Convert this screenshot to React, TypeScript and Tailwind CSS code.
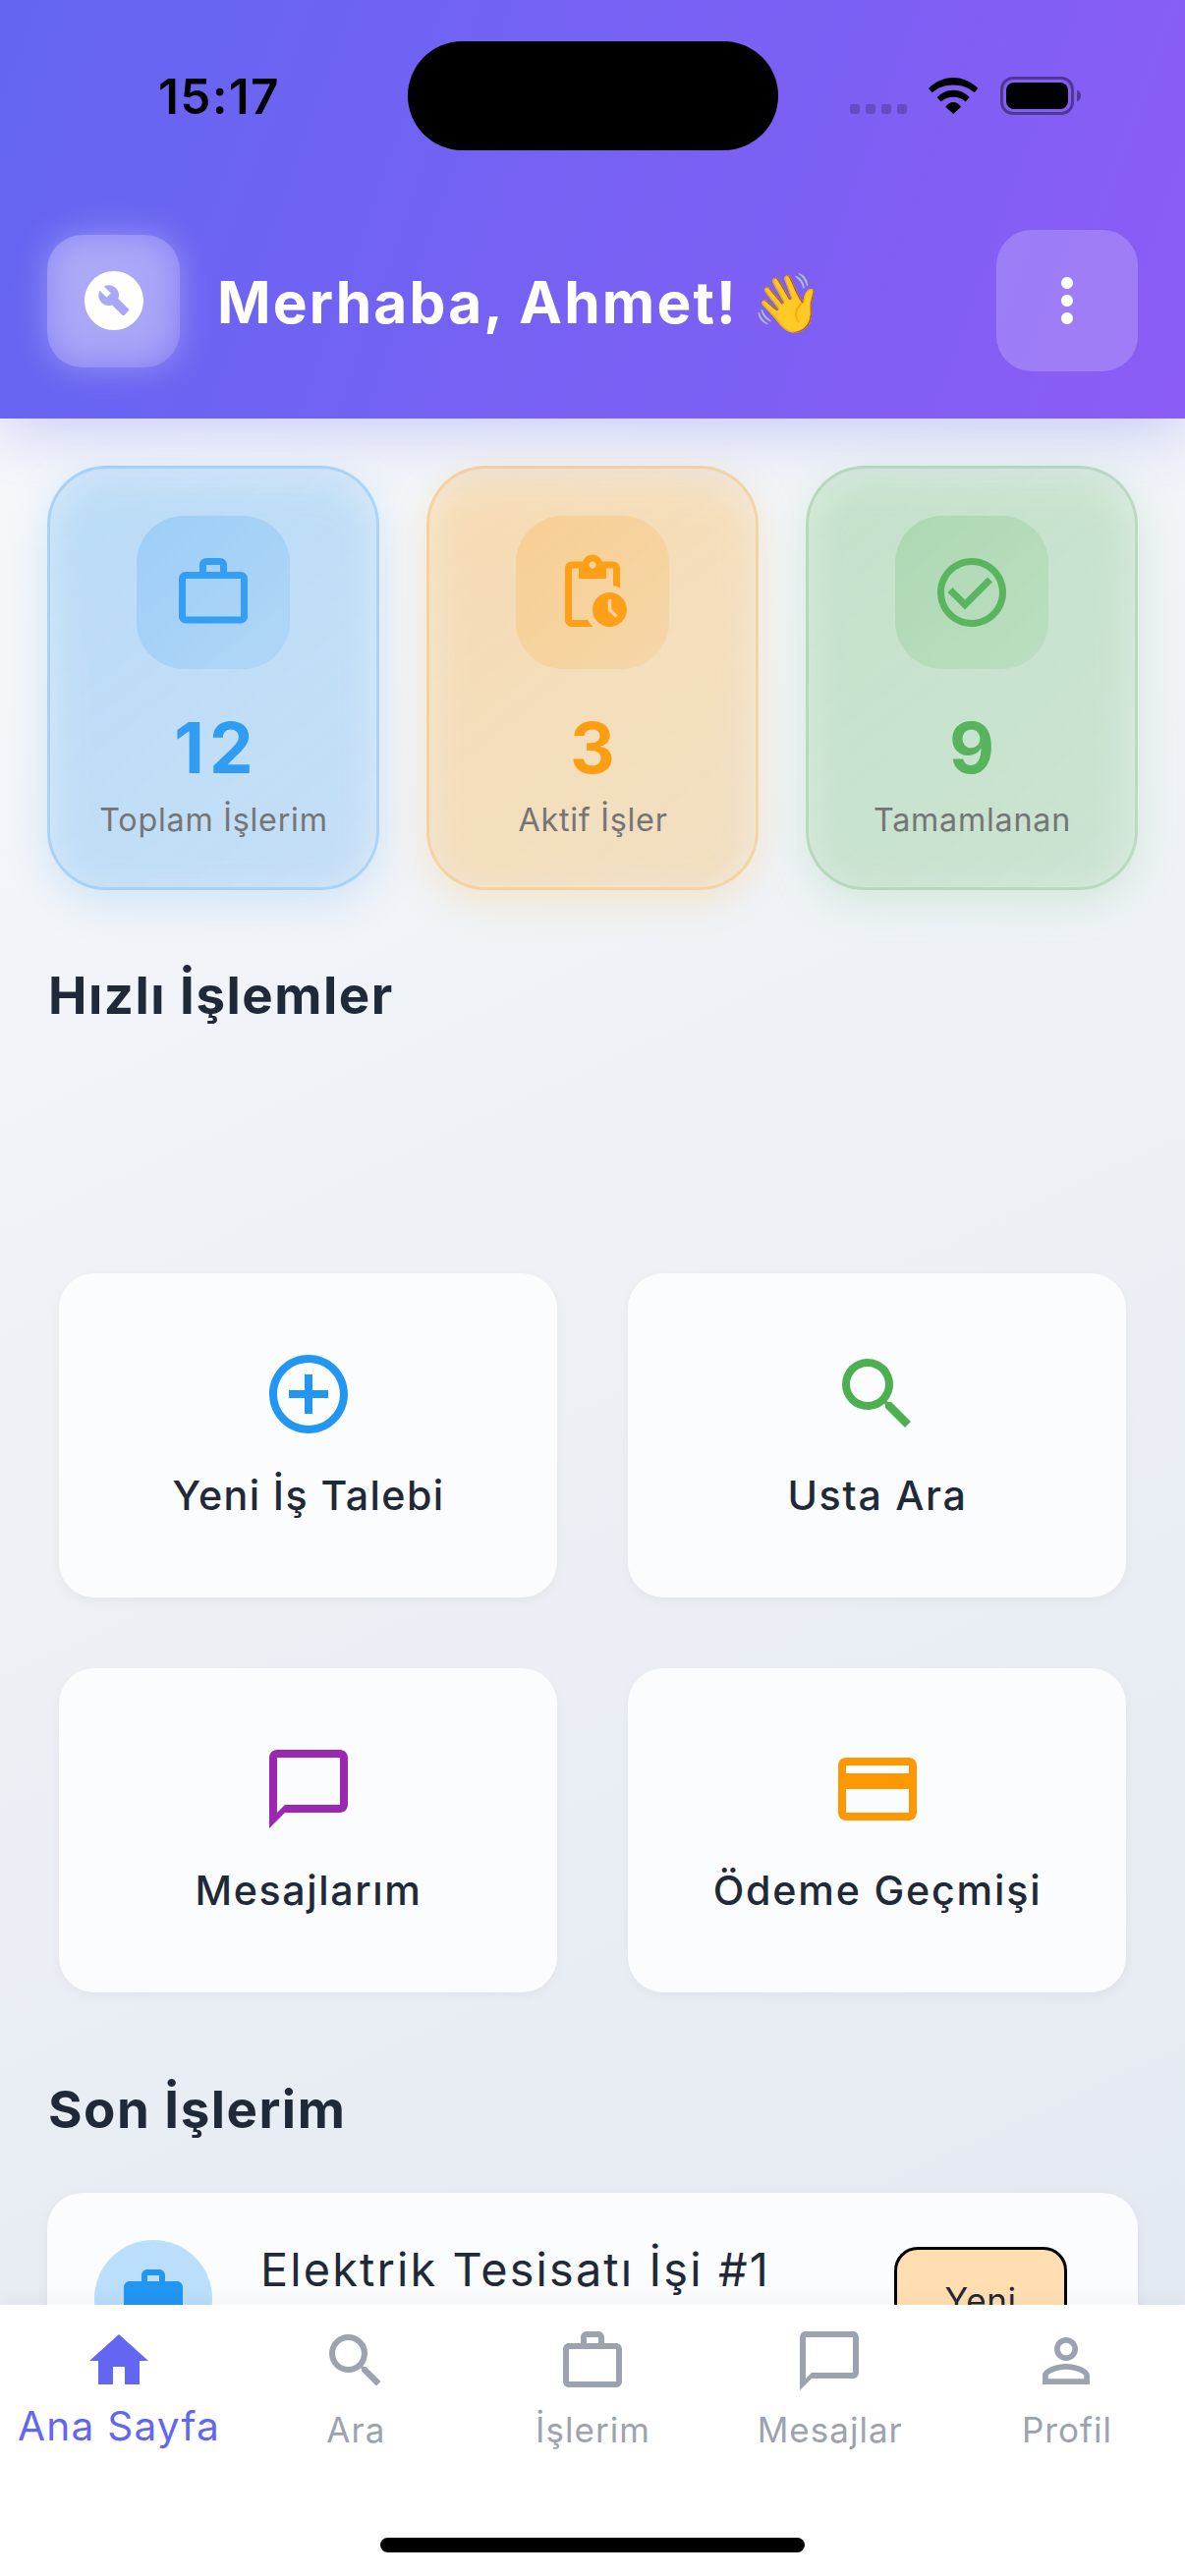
import type { IconType } from "react-icons";
import {
  MdAddCircleOutline,
  MdBuildCircle,
  MdChatBubbleOutline,
  MdCheckCircleOutline,
  MdHome,
  MdMoreVert,
  MdPayment,
  MdPendingActions,
  MdPersonOutline,
  MdSearch,
  MdWork,
  MdWorkOutline,
} from "react-icons/md";

type Stat = {
  icon: IconType;
  value: string;
  label: string;
  text: string;
  glow: string;
  card: string;
  tile: string;
  valueSpacing: string;
};

const stats: Stat[] = [
  {
    icon: MdWorkOutline,
    value: "12",
    label: "Toplam İşlerim",
    text: "text-[#2196F3]",
    glow: "bg-[#2196F3]/17",
    card: "border-[#2196F3]/22 bg-[linear-gradient(142deg,rgba(33,150,243,0.13),rgba(33,150,243,0.05))]",
    tile: "bg-[linear-gradient(135deg,rgba(33,150,243,0.2),rgba(33,150,243,0.1))]",
    valueSpacing: "tracking-[5px] pl-[6px]",
  },
  {
    icon: MdPendingActions,
    value: "3",
    label: "Aktif İşler",
    text: "text-[#FF9800]",
    glow: "bg-[#FF9800]/17",
    card: "border-[#FF9800]/22 bg-[linear-gradient(142deg,rgba(255,152,0,0.13),rgba(255,152,0,0.05))]",
    tile: "bg-[linear-gradient(135deg,rgba(255,152,0,0.2),rgba(255,152,0,0.1))]",
    valueSpacing: "",
  },
  {
    icon: MdCheckCircleOutline,
    value: "9",
    label: "Tamamlanan",
    text: "text-[#4CAF50]",
    glow: "bg-[#4CAF50]/17",
    card: "border-[#4CAF50]/22 bg-[linear-gradient(142deg,rgba(76,175,80,0.13),rgba(76,175,80,0.05))]",
    tile: "bg-[linear-gradient(135deg,rgba(76,175,80,0.2),rgba(76,175,80,0.1))]",
    valueSpacing: "",
  },
];

const actions: { icon: IconType; label: string; color: string; spacing: string }[] = [
  { icon: MdAddCircleOutline, label: "Yeni İş Talebi", color: "text-[#2196F3]", spacing: "tracking-[1.4px]" },
  { icon: MdSearch, label: "Usta Ara", color: "text-[#4CAF50]", spacing: "tracking-[1.7px]" },
  { icon: MdChatBubbleOutline, label: "Mesajlarım", color: "text-[#9C27B0]", spacing: "tracking-[1.6px]" },
  { icon: MdPayment, label: "Ödeme Geçmişi", color: "text-[#FF9800]", spacing: "tracking-[1.8px]" },
];

const tabs: { icon: IconType; label: string; active?: boolean }[] = [
  { icon: MdHome, label: "Ana Sayfa", active: true },
  { icon: MdSearch, label: "Ara" },
  { icon: MdWorkOutline, label: "İşlerim" },
  { icon: MdChatBubbleOutline, label: "Mesajlar" },
  { icon: MdPersonOutline, label: "Profil" },
];

function StatusBar() {
  return (
    <div className="flex h-[153px] items-center pt-[42px] text-black">
      <div className="w-[415px] pl-[161px] text-[49.5px] leading-[60px] font-semibold tracking-[1.3px]">15:17</div>
      <div className="h-[111px] w-[377px] rounded-full bg-black" />
      <div className="flex items-center pl-[73px]">
        <div className="mt-[27px] flex gap-[6px]">
          {[0, 1, 2, 3].map((i) => (
            <span key={i} className="size-[10px] rounded-[3px] bg-black/20" />
          ))}
        </div>
        <svg className="ml-[22px] h-[37px] w-[51px]" viewBox="0 0 51 37" fill="currentColor">
          <path d="M0 11C6.5 4.3 15.5 0 25.2 0S43.8 4.3 50.3 11L46.6 15.3C41 10.2 33.5 7.5 25.2 7.5S9.4 10.2 3.7 15.3Z" />
          <path d="M8.7 20C13 15.5 18.8 12.7 25.2 12.7S37.4 15.5 41.7 20L37.8 24.6C34.5 21.5 30 19.7 25.2 19.7S15.9 21.5 12.6 24.6Z" />
          <path d="M17.3 29.7C19.3 26.6 22 25 25.2 25S31 26.6 33 29.7L25.2 37Z" />
        </svg>
        <svg className="ml-[22px] h-[39px] w-[82px]" viewBox="0 0 82 39">
          <rect x="1.5" y="1.5" width="72" height="36" rx="11.5" fill="none" stroke="#000" strokeOpacity="0.4" strokeWidth="3" />
          <rect x="6" y="6" width="63" height="27" rx="8" fill="#000" />
          <path d="M78 13.5C80.5 14.5 82 16.8 82 19.5S80.5 24.5 78 25.5Z" fill="#000" fillOpacity="0.4" />
        </svg>
      </div>
    </div>
  );
}

function Header() {
  return (
    <header className="relative z-10 h-[426px] shrink-0 bg-[linear-gradient(109.5deg,#6366F1,#8B5CF6)] shadow-[0_12px_60px_rgba(99,102,241,0.3)]">
      <StatusBar />
      <div className="mt-[81px] flex h-[144px] items-center px-[48px]">
        <div className="relative size-[135px]">
          <div className="absolute inset-0 rounded-[36px] bg-white/30 blur-[17px]" />
          <div className="relative flex size-full items-center justify-center rounded-[36px] bg-[linear-gradient(135deg,rgba(255,255,255,0.24),rgba(255,255,255,0.14))]">
            <MdBuildCircle className="size-[72px] text-white" />
          </div>
        </div>
        <h1 className="flex-1 pt-[3px] pl-[38px] text-[58.6px] leading-[72px] font-bold tracking-[2.15px] whitespace-nowrap text-white">
          Merhaba, Ahmet!<span className="ml-[14px] tracking-normal">👋</span>
        </h1>
        <button className="flex size-[144px] items-center justify-center rounded-[36px] bg-white/20 text-white">
          <MdMoreVert className="size-[72px]" />
        </button>
      </div>
    </header>
  );
}

function StatCard({ stat }: { stat: Stat }) {
  const Icon = stat.icon;
  return (
    <div className="relative h-[432px]">
      <div className={`absolute inset-0 translate-y-[12px] rounded-[60px] blur-[21px] ${stat.glow}`} />
      <div className={`relative flex h-full flex-col items-center rounded-[60px] border-[3px] bg-origin-border pt-[48px] ${stat.card}`}>
        <div className={`flex size-[156px] items-center justify-center rounded-[48px] ${stat.tile}`}>
          <Icon className={`size-[84px] opacity-85 ${stat.text}`} />
        </div>
        <div className={`mt-[44px] text-[71px] leading-[72px] font-bold opacity-90 ${stat.text} ${stat.valueSpacing}`}>{stat.value}</div>
        <div className="mt-[18px] pl-[1px] text-[32.3px] leading-[40px] tracking-[0.75px] text-[#757575]">{stat.label}</div>
      </div>
    </div>
  );
}

function SectionTitle({ children, className }: { children: string; className: string }) {
  return (
    <h2 className={`pl-[1px] text-[52.8px] leading-[72px] font-bold tracking-[1.5px] text-[#1F2937] ${className}`}>{children}</h2>
  );
}

function JobCard() {
  return (
    <div className="mt-[49px] flex h-[300px] items-start rounded-[36px] bg-[#FBFCFE] px-[48px] pt-[48px] shadow-[0_3px_12px_rgba(0,0,0,0.05)]">
      <div className="flex size-[120px] items-center justify-center rounded-full bg-[#BBDEFB]">
        <MdWork className="size-[72px] text-[#2196F3]" />
      </div>
      <div className="flex-1 pl-[49px] text-[46.8px] leading-[60px] tracking-[2.15px] text-[#1F2937]">Elektrik Tesisatı İşi #1</div>
      <div className="mt-[7px] mr-[24px] flex h-[108px] w-[176px] items-center justify-center rounded-[24px] border-[3px] border-black bg-[#FFDFB2] text-[35px] tracking-[0.6px] text-[#1F2937]">
        Yeni
      </div>
    </div>
  );
}

function TabBar() {
  return (
    <nav className="relative z-10 flex h-[276px] shrink-0 flex-col items-center bg-white shadow-[0_-4px_20px_rgba(0,0,0,0.04)]">
      <div className="flex w-full pt-[21px]">
        {tabs.map(({ icon: Icon, label, active }) => (
          <div key={label} className={`flex w-0 flex-1 flex-col items-center ${active ? "text-[#6366F1]" : "text-[#9CA3AF]"}`}>
            <Icon className="size-[72px]" />
            <span
              className={`leading-[48px] whitespace-nowrap ${active ? "mt-[7px] pl-[1px] text-[40.7px] tracking-[1.17px]" : "mt-[10px] pl-[1px] text-[35px] tracking-[1.03px]"}`}
            >
              {label}
            </span>
          </div>
        ))}
      </div>
      <div className="mt-auto mb-6 h-[15px] w-[432px] rounded-full bg-black" />
    </nav>
  );
}

export default function App() {
  return (
    <div className="flex h-[2622px] w-[1206px] flex-col overflow-hidden bg-[linear-gradient(155.3deg,#F8FAFC,#E2E8F0)] font-['Inter',sans-serif]">
      <Header />
      <main className="min-h-0 flex-1 overflow-hidden px-[48px] pt-[48px]">
        <section className="grid grid-cols-3 gap-[48px]">
          {stats.map((stat) => (
            <StatCard key={stat.label} stat={stat} />
          ))}
        </section>
        <SectionTitle className="mt-[71px]">Hızlı İşlemler</SectionTitle>
        <section className="mt-[247px] grid grid-cols-2 gap-[72px] px-[12px]">
          {actions.map(({ icon: Icon, label, color, spacing }) => (
            <div
              key={label}
              className="flex h-[330px] flex-col items-center rounded-[36px] bg-[#FBFCFE] pt-[75px] shadow-[0_4px_12px_rgba(0,0,0,0.04)]"
            >
              <Icon className={`size-[96px] ${color}`} />
              <span className={`mt-[25px] pl-[1px] text-[41.2px] leading-[60px] font-medium text-[#1F2937] ${spacing}`}>{label}</span>
            </div>
          ))}
        </section>
        <SectionTitle className="mt-[83px]">Son İşlerim</SectionTitle>
        <JobCard />
      </main>
      <TabBar />
    </div>
  );
}
